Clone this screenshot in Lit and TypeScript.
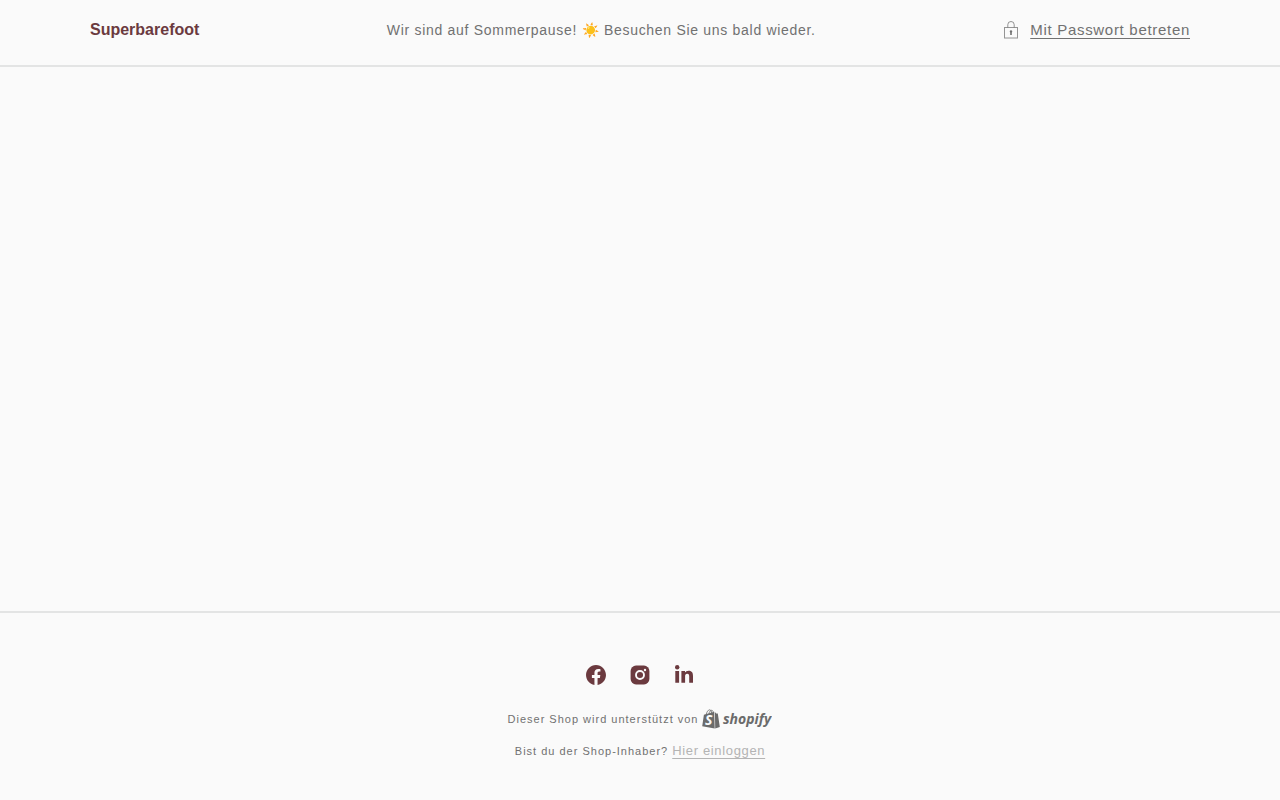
import { LitElement, html, css } from "lit";
import { customElement } from "lit/decorators.js";

const facebook = html`<svg viewBox="0 0 20 20" width="24" height="24" aria-hidden="true">
  <path fill="currentColor" transform="translate(-.4 -.4) scale(1.04)" d="M18 10.049C18 5.603 14.419 2 10 2c-4.419 0-8 3.603-8 8.049C2 14.067 4.925 17.396 8.75 18v-5.624H6.719v-2.328h2.03V8.275c0-2.017 1.195-3.132 3.023-3.132.874 0 1.79.158 1.79.158v1.98h-1.009c-.994 0-1.303.621-1.303 1.258v1.51h2.219l-.355 2.326H11.25V18c3.825-.604 6.75-3.933 6.75-7.951Z"/>
</svg>`;

const instagram = html`<svg viewBox="0 0 24 24" width="24" height="24" aria-hidden="true">
  <rect x="2.6" y="2.6" width="18.8" height="18.8" rx="5.4" fill="currentColor"/>
  <circle cx="12" cy="12" r="4" fill="none" stroke="#fafafa" stroke-width="1.9"/>
  <circle cx="17" cy="7" r="1.2" fill="#fafafa"/>
</svg>`;

const linkedin = html`<svg viewBox="0 0 24 24" width="24" height="24" aria-hidden="true">
  <g fill="currentColor">
    <circle cx="5.2" cy="4.2" r="2.2"/>
    <path d="M3.3 8h3.8v11.700H3.300zM9.400 8H13v1.600c.6-1.100 1.900-1.900 3.600-1.900 3.600 0 4.400 2.300 4.400 5.400v6.600h-3.800v-5.900c0-1.500-.1-3-2-3s-2.100 1.400-2.100 2.900v6H9.400z"/>
  </g>
</svg>`;

const lock = html`<svg class="lock" viewBox="0 0 16 20" width="16" height="20" aria-hidden="true">
  <g fill="none" stroke="currentColor" stroke-opacity=".75">
    <rect x="1.500" y="7.500" width="13" height="10.500"/>
    <path d="M4.800 7.500V4.700a3.200 3.200 0 0 1 6.400 0v2.800"/>
  </g>
  <path fill="currentColor" d="M8 10.200a1.300 1.300 0 0 1 .8 2.300v2.500H7.200v-2.500A1.300 1.300 0 0 1 8 10.200z"/>
</svg>`;

const shopify = html`<svg viewBox="0 0 70 20" width="70" height="20" role="img" aria-label="Shopify">
  <path fill="currentColor" d="M1.900 5.700 12.200 2.800l.5 16.600L.2 17.200zM12.900 2.900l1.200 1.500 1.700.2 2 13.500-4.600 1.300z"/>
  <path fill="none" stroke="currentColor" stroke-width=".8" d="M4.100 5.600C4.800 2.900 6.200.7 7.700.8c1.300.1 1.900 1.700 1.900 3.600M6.900 4.700C7.400 2.500 8.600 1.200 9.700 1.300c1 .1 1.500 1 1.700 2.200"/>
  <text class="mark" x="3" y="16">S</text>
  <text class="word" x="21" y="15">shopify</text>
</svg>`;

@customElement("app-root")
export class AppRoot extends LitElement {
  static styles = css`
    :host {
      display: flex;
      flex-direction: column;
      min-height: 100vh;
      background: #fafafa;
      color: #717171;
      font-family: "Liberation Sans", Arial, sans-serif;
      font-size: 14px;
      letter-spacing: 0.05em;
    }
    .header {
      border-bottom: 2px solid #e3e4e4;
    }
    .bar {
      display: flex;
      justify-content: space-between;
      align-items: center;
      box-sizing: border-box;
      max-width: 1200px;
      margin: 0 auto;
      padding: 20px 50px 25px;
    }
    .brand {
      margin: 0;
      color: #6b3a3f;
      font-size: 16px;
      line-height: 20px;
      letter-spacing: normal;
    }
    .notice {
      margin: 0;
      line-height: 20px;
    }
    .enter {
      display: flex;
      align-items: center;
      gap: 11px;
      padding: 0;
      border: 0;
      background: none;
      color: inherit;
      font: inherit;
      font-size: 15px;
      line-height: 20px;
      letter-spacing: inherit;
      cursor: pointer;
    }
    .enter span,
    .login {
      text-decoration: underline;
      text-underline-offset: 3px;
      text-decoration-thickness: 1px;
    }
    .main {
      flex: 1;
    }
    .footer {
      display: flex;
      flex-direction: column;
      align-items: center;
      padding: 50px 20px 37px;
      border-top: 2px solid #e3e4e4;
    }
    .social {
      display: flex;
      gap: 20px;
      margin: 0 0 20px;
      padding: 0;
      list-style: none;
    }
    .social a {
      display: block;
      color: #6b3a3f;
    }
    .social svg,
    .credit svg,
    .lock {
      display: block;
    }
    .credit,
    .owner {
      display: flex;
      align-items: center;
      gap: 4px;
      margin: 0;
      font-size: 11px;
      line-height: 24px;
      letter-spacing: 1px;
    }
    .owner {
      align-items: baseline;
      margin-top: 8px;
    }
    .credit a {
      color: #6b6b6b;
    }
    .login {
      color: #b4b4b4;
      font-size: 13px;
      letter-spacing: 0.05em;
    }
    .word,
    .mark {
      fill: currentColor;
      font-family: "Open Sans", sans-serif;
      font-style: italic;
      font-weight: 700;
      font-size: 14px;
      letter-spacing: normal;
    }
    .mark {
      fill: #fafafa;
    }
  `;

  render() {
    return html`
      <header class="header">
        <div class="bar">
          <h1 class="brand">Superbarefoot</h1>
          <p class="notice">Wir sind auf Sommerpause! ☀️ Besuchen Sie uns bald wieder.</p>
          <button class="enter" type="button">${lock}<span>Mit Passwort betreten</span></button>
        </div>
      </header>
      <main class="main"></main>
      <footer class="footer">
        <ul class="social">
          <li><a href="#" aria-label="Facebook">${facebook}</a></li>
          <li><a href="#" aria-label="Instagram">${instagram}</a></li>
          <li><a href="#" aria-label="LinkedIn">${linkedin}</a></li>
        </ul>
        <p class="credit">Dieser Shop wird unterstützt von <a href="#">${shopify}</a></p>
        <p class="owner">Bist du der Shop-Inhaber? <a class="login" href="#">Hier einloggen</a></p>
      </footer>
    `;
  }
}
